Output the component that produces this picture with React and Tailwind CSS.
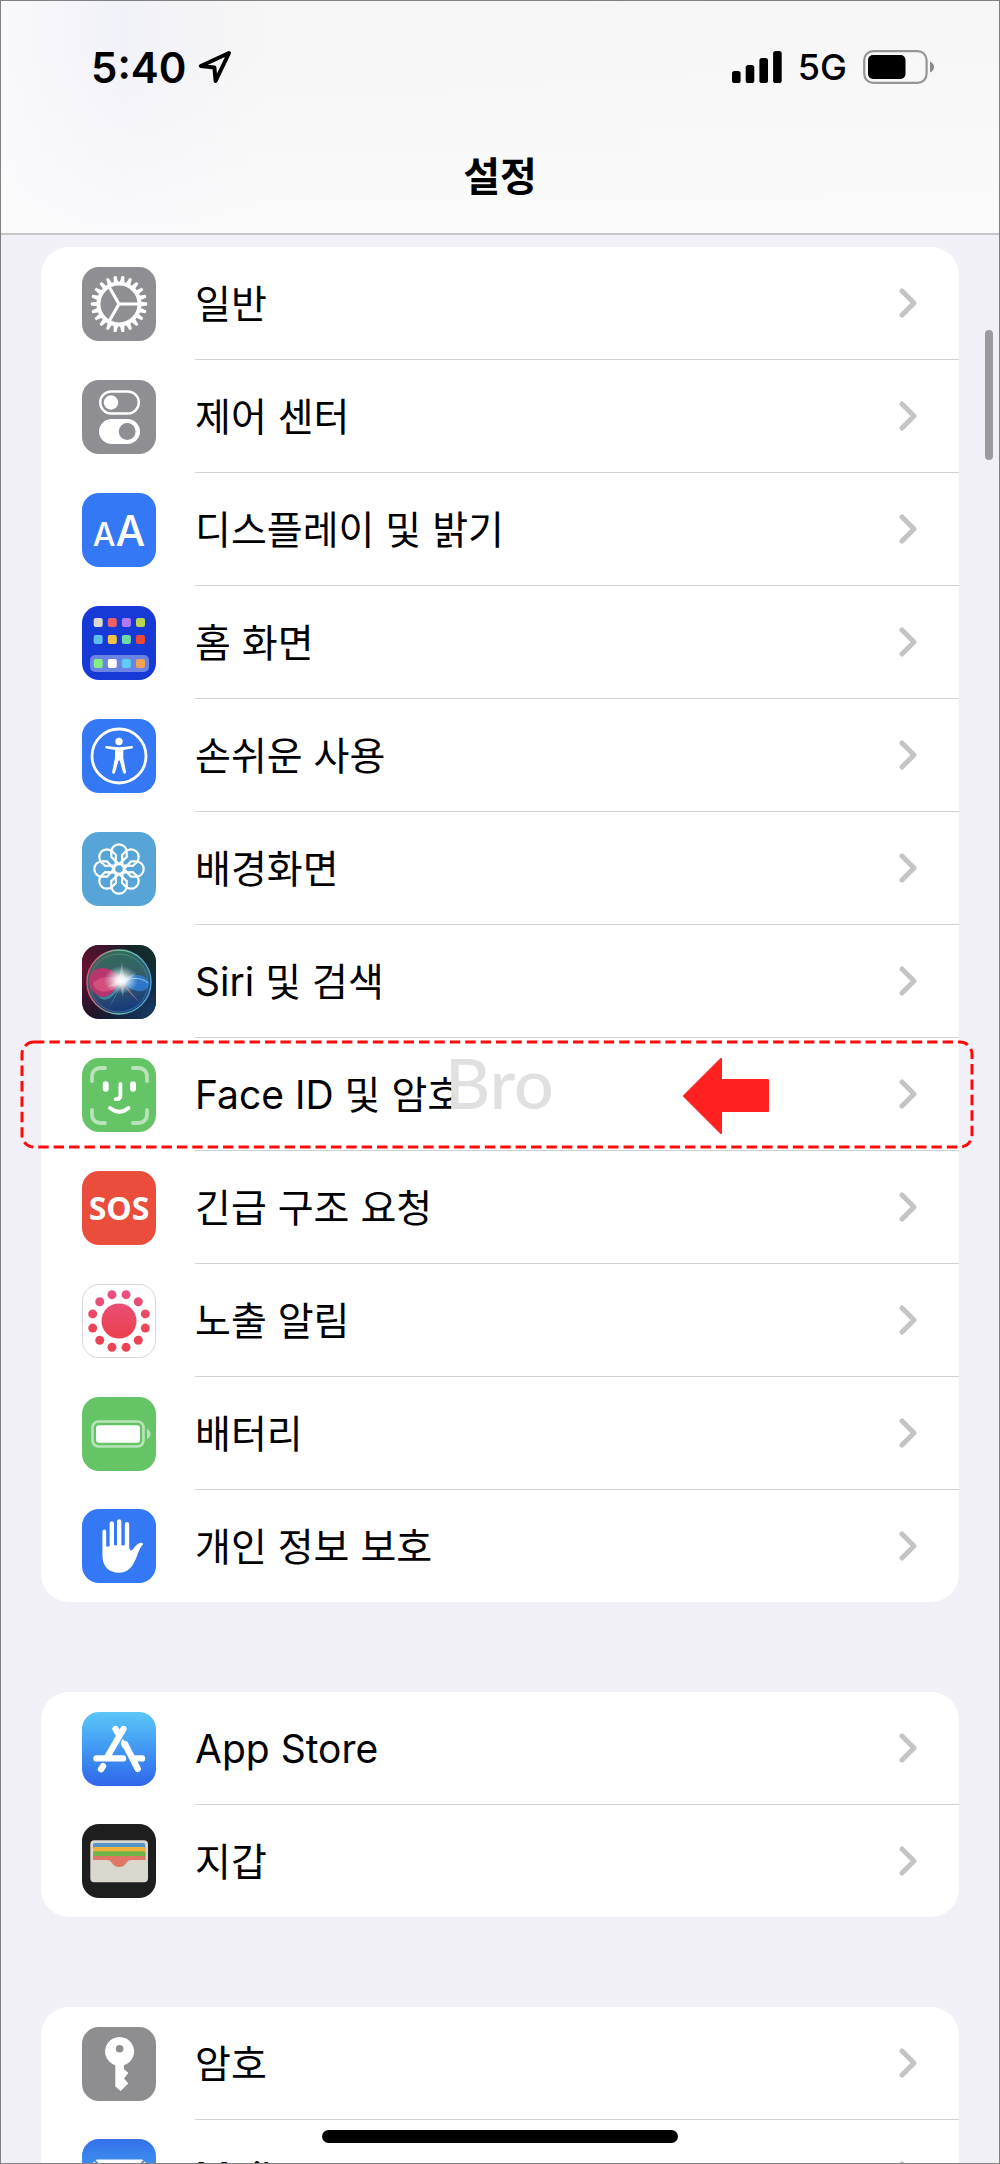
import { useId } from "react";

const flowerAngles = [0, 45, 90, 135, 180, 225, 270, 315];
const gearAngles = Array.from({ length: 22 }, (_, i) => (i * 360) / 22);
const dotAngles = Array.from({ length: 12 }, (_, i) => 15 + i * 30);
const homeRows = [
  { y: 12, colors: ["#d9d9cf", "#ee5f68", "#b078f5", "#b9d552"] },
  { y: 29, colors: ["#5cbdf8", "#f6c443", "#70d8a5", "#ea4a36"] },
  { y: 53, colors: ["#84ee82", "#ffffff", "#5ecbfa", "#f2a155"] },
];

function Tile({ className, children }) {
  return (
    <svg
      viewBox="0 0 74 74"
      aria-hidden="true"
      className={`size-[74px] shrink-0 rounded-[17px] ${className}`}
    >
      {children}
    </svg>
  );
}

function GearIcon() {
  return (
    <Tile className="bg-[#8e8e93]">
      <g fill="none" stroke="#fff">
        <circle cx="37" cy="37" r="20.5" strokeWidth="4" />
        <path d="M37 37H56M37 37L27.5 20.5M37 37L27.5 53.5" strokeWidth="3.2" />
      </g>
      {gearAngles.map((angle) => (
        <path
          key={angle}
          d="M58 34.6L65 35.6Q65.6 37 65 38.4L58 39.4Z"
          fill="#fff"
          transform={`rotate(${angle} 37 37)`}
        />
      ))}
    </Tile>
  );
}

function ControlIcon() {
  return (
    <Tile className="bg-[#8e8e93]">
      <rect x="18.2" y="11.5" width="38.6" height="22" rx="11" fill="none" stroke="#fff" strokeWidth="2.4" />
      <circle cx="29" cy="22.5" r="7.2" fill="#fff" />
      <rect x="17" y="39" width="41" height="25" rx="12.5" fill="#fff" />
      <circle cx="45.2" cy="51.5" r="8.4" fill="#8e8e93" />
    </Tile>
  );
}

function DisplayIcon() {
  return (
    <span className="flex size-[74px] shrink-0 items-baseline justify-center rounded-[17px] bg-[#3478f6] leading-[76px] font-medium text-white">
      <span className="text-[32px]">A</span>
      <span className="text-[42px]">A</span>
    </span>
  );
}

function HomeIcon() {
  return (
    <Tile className="bg-[#173ad6]">
      <rect x="8" y="49" width="59" height="17" rx="5" fill="#6b83e3" />
      {homeRows.map((row) =>
        row.colors.map((color, i) => (
          <rect key={color} x={11.7 + i * 14.1} y={row.y} width="9" height="9" rx="2" fill={color} />
        ))
      )}
    </Tile>
  );
}

function AccessibilityIcon() {
  return (
    <Tile className="bg-[#3478f6]">
      <circle cx="37" cy="37" r="27" fill="none" stroke="#fff" strokeWidth="2.8" />
      <circle cx="37" cy="22.5" r="3.7" fill="#fff" />
      <path
        d="M24.6 27.1Q37 29.2 49.6 27.1Q51 27 51 28.3Q51 29.4 49.8 29.6L41.3 31.1V39L44 52.6Q44.2 54.4 42.9 54.7Q41.6 55 41.1 53.4L37.7 41.6H36.5L33.1 53.4Q32.6 55 31.2 54.7Q29.9 54.4 30.2 52.6L33 39V31.1L24.4 29.6Q23.2 29.4 23.3 28.2Q23.4 27 24.6 27.1Z"
        fill="#fff"
      />
    </Tile>
  );
}

function WallpaperIcon() {
  return (
    <Tile className="bg-[#57a5d7]">
      <g fill="none" stroke="#fff" strokeWidth="2.2">
        <circle cx="37" cy="37" r="4.9" />
        {flowerAngles.map((angle) => (
          <path
            key={angle}
            d="M37 32L29.3 25V20A7.7 7.7 0 0 1 44.7 20V25Z"
            transform={`rotate(${angle} 37 37)`}
          />
        ))}
      </g>
    </Tile>
  );
}

function SiriIcon() {
  const id = useId();
  return (
    <Tile className="bg-[#101526]">
      <defs>
        <radialGradient id={`${id}a`} cx="0" cy="0.3" r="0.8">
          <stop offset="0" stopColor="#6a1230" />
          <stop offset="1" stopColor="#6a1230" stopOpacity="0" />
        </radialGradient>
        <radialGradient id={`${id}b`} cx="0.95" cy="0.95" r="0.8">
          <stop offset="0" stopColor="#173a63" />
          <stop offset="1" stopColor="#173a63" stopOpacity="0" />
        </radialGradient>
        <radialGradient id={`${id}g`} cx="1" cy="0" r="0.7">
          <stop offset="0" stopColor="#12352d" />
          <stop offset="1" stopColor="#12352d" stopOpacity="0" />
        </radialGradient>
        <linearGradient id={`${id}c`} x1="0.3" y1="0" x2="0.5" y2="1">
          <stop offset="0" stopColor="#2f7a62" />
          <stop offset="0.45" stopColor="#3b6a72" />
          <stop offset="1" stopColor="#153a86" />
        </linearGradient>
        <linearGradient id={`${id}d`} x1="0" y1="0.5" x2="1" y2="0.6">
          <stop offset="0" stopColor="#e05a7c" />
          <stop offset="0.5" stopColor="#6fc6a6" />
          <stop offset="1" stopColor="#4c9de0" />
        </linearGradient>
        <radialGradient id={`${id}e`}>
          <stop offset="0" stopColor="#fff" />
          <stop offset="0.3" stopColor="#fff" stopOpacity="0.85" />
          <stop offset="1" stopColor="#bfe8ee" stopOpacity="0" />
        </radialGradient>
      </defs>
      <rect width="74" height="74" fill={`url(#${id}a)`} />
      <rect width="74" height="74" fill={`url(#${id}g)`} />
      <rect width="74" height="74" fill={`url(#${id}b)`} />
      <circle cx="37" cy="37" r="32" fill={`url(#${id}c)`} opacity="0.85" />
      <circle cx="37" cy="37" r="32" fill="none" stroke={`url(#${id}d)`} strokeWidth="1.4" />
      <circle cx="37" cy="38" r="29" fill="none" stroke={`url(#${id}d)`} strokeWidth="0.6" opacity="0.7" />
      <path d="M40 36C32 22 15 19 9 29C5 38 10 50 20 52C28 52 34 44 40 36Z" fill="#cf2f6d" opacity="0.85" />
      <path d="M40 36C30 30 18 31 11 38C13 48 27 52 40 36Z" fill="#e8608a" opacity="0.6" />
      <path d="M40 37C33 53 22 60 15 50C23 56 32 48 40 37Z" fill="#4fc3c9" opacity="0.5" />
      <path d="M40 37C48 28 63 27 67 38C66 48 53 50 40 37Z" fill="#2f7ed6" opacity="0.85" />
      <path d="M40 37C47 33 58 31 66 38" fill="none" stroke="#8cc8f5" strokeWidth="1" />
      <path d="M41 38L58 58L47 47Z" fill="#e58ba5" opacity="0.7" />
      <path d="M39 39L26 64L34 51Z" fill="#5ea6f0" opacity="0.5" />
      <ellipse cx="39" cy="35" rx="17" ry="14" fill={`url(#${id}e)`} />
      <path d="M40 17L42 33L54 28L43 38L41 52L38 40L25 42L37 34Z" fill="#fff" opacity="0.3" />
    </Tile>
  );
}

function FaceIdIcon() {
  return (
    <Tile className="bg-[#65c466]">
      <g fill="none" strokeLinecap="round">
        <path
          d="M10 23V18A8 8 0 0 1 18 10H23M51 10H57A8 8 0 0 1 65 18V23M65 52V57A8 8 0 0 1 57 65H51M23 65H18A8 8 0 0 1 10 57V52"
          stroke="#b9e4ba"
          strokeWidth="3.8"
        />
        <path d="M23.7 26.3V30.7M51 26.3V30.7" stroke="#fff" strokeWidth="6" />
        <path d="M38.4 26V37.5Q38.4 41 34.8 41.2H33.7" stroke="#fff" strokeWidth="3.8" />
        <path d="M28 50Q37.5 57.5 46.5 50" stroke="#fff" strokeWidth="3.8" />
      </g>
    </Tile>
  );
}

function SosIcon() {
  return (
    <span className="flex size-[74px] shrink-0 items-center justify-center rounded-[17px] bg-[#eb4d3d] font-['Open_Sans',sans-serif] text-[32px] font-bold text-white">
      SOS
    </span>
  );
}

function ExposureIcon() {
  const id = useId();
  return (
    <Tile className="border border-[#d8d8da] bg-white">
      <linearGradient id={id} gradientUnits="userSpaceOnUse" x1="0" y1="6" x2="0" y2="50">
        <stop offset="0" stopColor="#ea5080" />
        <stop offset="1" stopColor="#eb4354" />
      </linearGradient>
      <g fill={`url(#${id})`}>
        <circle cx="37" cy="37" r="18" />
        {dotAngles.map((angle) => (
          <circle
            key={angle}
            cx={37 + 28 * Math.sin((angle * Math.PI) / 180)}
            cy={37 - 28 * Math.cos((angle * Math.PI) / 180)}
            r="4.6"
          />
        ))}
      </g>
    </Tile>
  );
}

function BatteryIcon() {
  return (
    <Tile className="bg-[#65c466]">
      <rect x="10.5" y="24.5" width="51" height="25" rx="6" fill="none" stroke="#b9e4ba" strokeWidth="2.6" />
      <rect x="14" y="28.3" width="44" height="17.4" rx="3" fill="#fff" />
      <path d="M65 31.8Q68.6 34 68.6 37T65 42.2Z" fill="#b9e4ba" />
    </Tile>
  );
}

function HandIcon() {
  return (
    <Tile className="bg-[#3478f6]">
      <path
        d="M20.4 22.5Q20.4 20.5 22.3 20.5T24.2 22.5V37.3Q26 38.6 27.6 36.8V14.5Q27.6 12.2 29.8 12.2T32 14.5V36Q33.5 36.9 35 36V12.6Q35 10.3 37.2 10.3T39.4 12.6V36Q41.2 36.9 42.8 36V15.2Q42.8 13 45 13T47.2 15.2V38.5Q48.5 43.5 51 40.2Q55.5 34 58.5 33.7Q61.5 33.5 61 35.4C57 39 56 46 52.5 52.5C49.5 59.5 44.5 63.7 37 63.7C27 63.7 20.4 58 20.4 46Z"
        fill="#fff"
      />
    </Tile>
  );
}

function AppStoreIcon() {
  return (
    <Tile className="bg-linear-to-b from-[#5cc6f8] to-[#3165ea]">
      <g fill="none" stroke="#fff" strokeWidth="6.4" strokeLinecap="round">
        <path d="M41.4 17L25.5 44.5M33.5 17L37 23M21 54.2L19 57.2" />
        <path d="M14.5 46.4H41M53 46.4H60" />
        <path d="M43 32L55.7 56.8" />
      </g>
      <path d="M39 31.5Q39 28.8 41 26.8L46 36L40.5 36Z" fill="#fff" />
    </Tile>
  );
}

function WalletIcon() {
  return (
    <Tile className="bg-[#1e1e1e]">
      <rect x="8.3" y="16.3" width="57.7" height="42" rx="4" fill="#dad7cf" />
      <path d="M11 36V21A2 2 0 0 1 13 19H61.3A2 2 0 0 1 63.3 21V36Z" fill="#5495c8" />
      <path d="M11 36V25A2 2 0 0 1 13 23H61.3A2 2 0 0 1 63.3 25V36Z" fill="#f2b13c" />
      <path d="M11 36V29A2 2 0 0 1 13 27.2H61.3A2 2 0 0 1 63.3 29V36Z" fill="#6fb548" />
      <path
        d="M11 36V34A2 2 0 0 1 13 32H61.3A2 2 0 0 1 63.3 34V36H49Q46 36 44.2 39Q42 43 37.2 43T30 39Q28.3 36 25.3 36Z"
        fill="#e07765"
      />
    </Tile>
  );
}

function KeyIcon() {
  return (
    <Tile className="bg-[#8e8e90]">
      <path
        fillRule="evenodd"
        d="M33.3 38.3A14.5 14.5 0 1 1 41.9 38.3V42L46.3 46L42 51.5L46.3 56.5L38.7 64L33.3 59.5ZM37.6 17.9A3.8 3.8 0 1 0 37.6 25.5A3.8 3.8 0 1 0 37.6 17.9Z"
        fill="#fff"
      />
    </Tile>
  );
}

function MailIcon() {
  return (
    <Tile className="bg-linear-to-b from-[#3470ea] to-[#5cc6f8]">
      <rect x="11" y="20.5" width="53" height="35" rx="5" fill="#fff" />
      <path d="M12 21L34 42Q37.5 45 41 42L63 21" fill="none" stroke="#4186ee" strokeWidth="1.8" />
    </Tile>
  );
}

const groups = [
  [
    { label: "일반", Icon: GearIcon },
    { label: "제어 센터", Icon: ControlIcon },
    { label: "디스플레이 및 밝기", Icon: DisplayIcon },
    { label: "홈 화면", Icon: HomeIcon },
    { label: "손쉬운 사용", Icon: AccessibilityIcon },
    { label: "배경화면", Icon: WallpaperIcon },
    { label: "Siri 및 검색", Icon: SiriIcon },
    { label: "Face ID 및 암호", Icon: FaceIdIcon, marked: true },
    { label: "긴급 구조 요청", Icon: SosIcon },
    { label: "노출 알림", Icon: ExposureIcon },
    { label: "배터리", Icon: BatteryIcon },
    { label: "개인 정보 보호", Icon: HandIcon },
  ],
  [
    { label: "App Store", Icon: AppStoreIcon },
    { label: "지갑", Icon: WalletIcon },
  ],
  [
    { label: "암호", Icon: KeyIcon },
    { label: "Mail", Icon: MailIcon },
  ],
];

function Chevron() {
  return (
    <svg viewBox="0 0 18 30" aria-hidden="true" className="h-[30px] w-[18px] shrink-0">
      <path d="M3 3L15 15L3 27" fill="none" stroke="#c4c4c6" strokeWidth="5" strokeLinecap="round" strokeLinejoin="round" />
    </svg>
  );
}

// Red dashed frame, arrow and watermark drawn over the Face ID row
function Annotation() {
  return (
    <div className="pointer-events-none absolute top-1 -right-[13px] bottom-1 -left-[19px]">
      <svg aria-hidden="true" className="size-full overflow-visible">
        <rect
          width="100%"
          height="100%"
          rx="12"
          fill="none"
          stroke="#ff0a0a"
          strokeWidth="3"
          strokeDasharray="10.4 5"
        />
      </svg>
      <span className="absolute top-0 left-[423px] font-['Lato',sans-serif] text-[70px] leading-[80px] font-medium text-[#e0e0e0]">
        Bro
      </span>
      <svg viewBox="0 0 86 76" aria-hidden="true" className="absolute top-4 right-[203px] h-[76px] w-[86px]">
        <path
          d="M1 38L38 1V22H85V53H38V75Z"
          fill="#ff2121"
          stroke="#ff2121"
          strokeWidth="2"
          strokeLinejoin="round"
        />
      </svg>
    </div>
  );
}

function Row({ label, Icon, marked }) {
  return (
    <li className="group relative">
      <a href="#" className="flex items-center pl-[41px]">
        <Icon />
        <span className="ml-[39px] flex min-w-0 flex-1 items-center justify-between border-b border-[#d2d2d4] pr-[42px] group-last:border-b-0">
          <span className="truncate pt-0.5 text-[39px] leading-[110px]">{label}</span>
          <Chevron />
        </span>
      </a>
      {marked && <Annotation />}
    </li>
  );
}

function StatusBar() {
  return (
    <div className="flex h-[132px] items-center justify-between pr-16 pl-[90px]">
      <div className="flex items-center gap-3">
        <span className="text-[42px] font-semibold">5:40</span>
        <svg viewBox="0 0 34 34" aria-hidden="true" className="size-[34px]">
          <path
            d="M31 3L2.8 16L16.4 17.4L17.6 31Z"
            fill="none"
            stroke="#000"
            strokeWidth="4"
            strokeLinejoin="round"
          />
        </svg>
      </div>
      <div className="flex items-center gap-4">
        <svg viewBox="0 0 50 32" aria-hidden="true" className="h-8 w-[50px]">
          <rect x="0" y="20" width="8.6" height="12" rx="2.6" />
          <rect x="13.7" y="14" width="8.6" height="18" rx="2.6" />
          <rect x="27.4" y="7" width="8.6" height="25" rx="2.6" />
          <rect x="41.1" y="0" width="8.6" height="32" rx="2.6" />
        </svg>
        <span className="text-4xl font-medium">5G</span>
        <svg viewBox="0 0 72 34" aria-hidden="true" className="h-[34px] w-[72px]">
          <rect x="1.2" y="1.2" width="62.4" height="31.6" rx="9" fill="none" stroke="#959595" strokeWidth="2.2" />
          <rect x="5" y="5" width="37.5" height="24" rx="5" />
          <path d="M67 11.5Q71 13.5 71 17T67 22.5Z" fill="#8a8a8a" />
        </svg>
      </div>
    </div>
  );
}

export default function App() {
  return (
    <div className="relative flex h-screen flex-col overflow-hidden border border-[#808080] bg-[#f1f0f6] font-['Inter','Noto_Sans_CJK_KR',sans-serif] text-black">
      <header className="shrink-0 border-b-2 border-[#c6c6c8] bg-[linear-gradient(180deg,rgba(251,251,252,0)_20%,rgba(251,251,252,0.9)_100%),linear-gradient(90deg,#f9f9fc_0%,#f1f1f9_12%,#f6f6f6_26%,#f7f7f7_100%)]">
        <StatusBar />
        <h1 className="h-[100px] text-center text-[40px] leading-[88px] font-semibold">설정</h1>
      </header>

      <main className="flex min-h-0 flex-1 flex-col gap-[90px] overflow-hidden px-10 pt-3">
        {groups.map((rows) => (
          <ul key={rows[0].label} className="shrink-0 rounded-[28px] bg-white">
            {rows.map((row) => (
              <Row key={row.label} {...row} />
            ))}
          </ul>
        ))}
      </main>

      <div className="absolute top-[329px] right-[6px] h-[130px] w-2 rounded-full bg-[#9b9b9d]" />
      <div className="absolute bottom-5 left-1/2 h-[13px] w-[356px] -translate-x-1/2 rounded-full bg-black" />
    </div>
  );
}
